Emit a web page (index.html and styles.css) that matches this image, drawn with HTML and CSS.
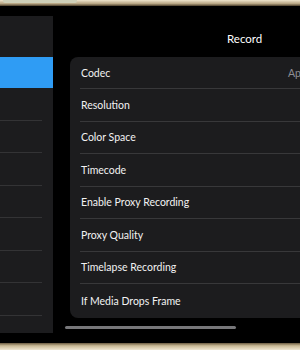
FILE: index.html
```html
<!DOCTYPE html>
<html lang="en">
<head>
    <meta charset="UTF-8">
    <meta name="viewport" content="width=device-width, initial-scale=1.0">
    <title>Record Settings</title>
    <link rel="stylesheet" href="styles.css">
</head>
<body>

    <!-- Device frame top -->
    <div class="frame-top">
        <div class="frame-tab"></div>
    </div>

    <div class="screen">

        <!-- Sidebar -->
        <div class="sidebar">
            <div class="sidebar-head"></div>
            <div class="side-item selected"></div>
            <div class="side-item"></div>
            <div class="side-item"></div>
            <div class="side-item"></div>
            <div class="side-item"></div>
            <div class="side-item"></div>
            <div class="side-item"></div>
            <div class="side-item"></div>
        </div>

        <!-- Main settings -->
        <div class="main">
            <h1 class="title">Record</h1>

            <div class="card">
                <div class="row"><span class="label">Codec</span><span class="value">Apple ProRes</span></div>
                <div class="row"><span class="label">Resolution</span></div>
                <div class="row"><span class="label">Color Space</span></div>
                <div class="row"><span class="label">Timecode</span></div>
                <div class="row"><span class="label">Enable Proxy Recording</span></div>
                <div class="row"><span class="label">Proxy Quality</span></div>
                <div class="row"><span class="label">Timelapse Recording</span></div>
                <div class="row"><span class="label">If Media Drops Frame</span></div>
            </div>

            <div class="scrollbar"></div>
        </div>
    </div>

    <!-- Device frame bottom -->
    <div class="frame-bottom"></div>

</body>
</html>
```

FILE: styles.css
```css
body {
    margin: 0;
    width: 300px;
    height: 350px;
    overflow: hidden;
    background: #000;
    font-family: 'Lato', sans-serif;
    color: #f2f2f2;
}

.frame-top {
    height: 6px;
    background: linear-gradient(#eee4cc, #b8a684 60%, #4a3e2a);
}

.frame-tab {
    width: 74px;
    height: 3px;
    margin-left: 3px;
    background: #cfd0b8;
    border-radius: 0 0 2px 2px;
}

.frame-bottom {
    height: 7px;
    background: linear-gradient(#6a5a40, #c8b894 40%, #efe6d2);
}

.screen {
    display: flex;
    height: 337px;
    overflow: hidden;
}

/* Sidebar */
.sidebar {
    width: 53px;
    flex-shrink: 0;
    margin-top: 10px;
    height: 317px;
    background: #1c1c1e;
    overflow: hidden;
}

.sidebar-head {
    height: 41px;
}

.side-item {
    height: 31.5px;
    margin-right: 11px;
    border-bottom: 1px solid #333335;
}

.side-item.selected {
    height: 31px;
    margin-right: 0;
    background: #2f9cf4;
    border-bottom: none;
}

/* Main */
.main {
    flex: 1;
    padding-left: 17px;
    min-width: 0;
    overflow: hidden;
}

.title {
    margin: 0;
    padding: 26px 0 0 157px;
    height: 25px;
    font-size: 11.5px;
    font-weight: normal;
    line-height: 14px;
    color: #fff;
    white-space: nowrap;
}

.card {
    width: 300px;
    background: #1c1c1e;
    border-radius: 8px;
}

.row {
    display: flex;
    align-items: center;
    height: 31.5px;
    padding-left: 11px;
    font-size: 10.5px;
    white-space: nowrap;
    position: relative;
}

.row:first-child {
    height: 31px;
}

.row::after {
    content: "";
    position: absolute;
    left: 10px;
    right: 0;
    bottom: -1px;
    height: 1px;
    background: #38383a;
}

.row:last-child {
    height: 34px;
}

.row:last-child::after {
    display: none;
}

.row + .row {
    margin-top: 1px;
}

.label {
    flex: 0 0 207px;
}

.value {
    color: #8e8e93;
}

.scrollbar {
    width: 171px;
    height: 3px;
    margin: 8px 0 0 -5px;
    background: #77777a;
    border-radius: 2px;
}
```
